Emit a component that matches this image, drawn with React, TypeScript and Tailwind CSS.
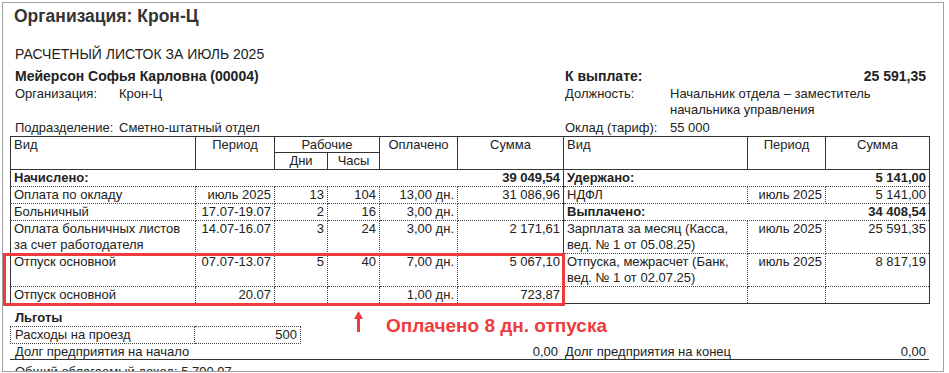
import React from "react"

const dot = "border border-dotted border-[#444] p-0 px-[3px] align-top leading-[16px] overflow-hidden"
const sep = "[border-right-style:solid] border-r-[#333]"
const th = "border border-[#333] p-0 px-[3px] align-top leading-[15px] font-normal text-center"

const Num = ({ children }: { children?: React.ReactNode }) => (
  <div className="text-right whitespace-nowrap">{children}</div>
)

export default function App() {
  return (
    <div className="relative h-[373px] w-[949px] overflow-hidden bg-white font-['Liberation_Sans',Arial,sans-serif] text-[13px] text-[#222]">
      <div className="mt-[2px] ml-[2px] h-[370px] w-[942px] overflow-hidden border border-[#a0a0a0]">
        <div className="pt-[3px] pl-[11px] text-[17.5px] leading-[20px] font-bold text-[#333]">Организация: Крон-Ц</div>
        <div className="mt-[20px] pl-[12px] text-[14px] leading-[16px]">РАСЧЕТНЫЙ ЛИСТОК ЗА ИЮЛЬ 2025</div>

        <div className="mt-[6px] ml-[7px] flex">
          <div className="w-[552px] pl-[5px]">
            <div className="h-[17px] text-[14px] leading-[17px] font-bold">Мейерсон Софья Карловна (00004)</div>
            <div className="flex h-[17px] leading-[17px]">
              <span className="w-[104px]">Организация:</span>
              <span>Крон-Ц</span>
            </div>
            <div className="h-[17px]" />
            <div className="flex h-[17px] leading-[17px]">
              <span className="w-[104px]">Подразделение:</span>
              <span>Сметно-штатный отдел</span>
            </div>
          </div>
          <div className="w-[367px] pr-[3px] pl-[3px]">
            <div className="flex h-[17px] justify-between text-[14px] leading-[17px] font-bold">
              <span>К выплате:</span>
              <span>25 591,35</span>
            </div>
            <div className="flex h-[34px] pt-[1px] leading-[16px]">
              <span className="w-[105px]">Должность:</span>
              <span>
                Начальник отдела – заместитель
                <br />
                начальника управления
              </span>
            </div>
            <div className="flex h-[17px] leading-[17px]">
              <span className="w-[105px]">Оклад (тариф):</span>
              <span>55 000</span>
            </div>
          </div>
        </div>

        <table className="ml-[7px] w-[919px] table-fixed border-collapse border border-[#333]">
          <colgroup>
            <col className="w-[185px]" />
            <col className="w-[79px]" />
            <col className="w-[53px]" />
            <col className="w-[52px]" />
            <col className="w-[78px]" />
            <col className="w-[106px]" />
            <col className="w-[184px]" />
            <col className="w-[78px]" />
            <col className="w-[104px]" />
          </colgroup>
          <thead>
            <tr className="h-[15px]">
              <th rowSpan={2} className={th + " text-left"}>Вид</th>
              <th rowSpan={2} className={th}>Период</th>
              <th colSpan={2} className={th}>Рабочие</th>
              <th rowSpan={2} className={th}>Оплачено</th>
              <th rowSpan={2} className={th}>Сумма</th>
              <th rowSpan={2} className={th + " text-left"}>Вид</th>
              <th rowSpan={2} className={th}>Период</th>
              <th rowSpan={2} className={th}>Сумма</th>
            </tr>
            <tr className="h-[17px]">
              <th className={th + " leading-[16px]"}>Дни</th>
              <th className={th + " leading-[16px]"}>Часы</th>
            </tr>
          </thead>
          <tbody>
            <tr className="h-[17px]">
              <td colSpan={6} className={dot + " " + sep + " font-bold"}>
                <div className="flex justify-between">
                  <span>Начислено:</span>
                  <span>39 049,54</span>
                </div>
              </td>
              <td colSpan={3} className={dot + " font-bold"}>
                <div className="flex justify-between">
                  <span>Удержано:</span>
                  <span>5 141,00</span>
                </div>
              </td>
            </tr>
            <tr className="h-[17px]">
              <td className={dot}>Оплата по окладу</td>
              <td className={dot}><Num>июль 2025</Num></td>
              <td className={dot}><Num>13</Num></td>
              <td className={dot}><Num>104</Num></td>
              <td className={dot}><Num>13,00 дн.</Num></td>
              <td className={dot + " " + sep}><Num>31 086,96</Num></td>
              <td className={dot}>НДФЛ</td>
              <td className={dot}><Num>июль 2025</Num></td>
              <td className={dot}><Num>5 141,00</Num></td>
            </tr>
            <tr className="h-[17px]">
              <td className={dot}>Больничный</td>
              <td className={dot}><Num>17.07-19.07</Num></td>
              <td className={dot}><Num>2</Num></td>
              <td className={dot}><Num>16</Num></td>
              <td className={dot}><Num>3,00 дн.</Num></td>
              <td className={dot + " " + sep}></td>
              <td colSpan={3} className={dot + " font-bold"}>
                <div className="flex justify-between">
                  <span>Выплачено:</span>
                  <span>34 408,54</span>
                </div>
              </td>
            </tr>
            <tr className="h-[33px]">
              <td className={dot}>Оплата больничных листов за счет работодателя</td>
              <td className={dot}><Num>14.07-16.07</Num></td>
              <td className={dot}><Num>3</Num></td>
              <td className={dot}><Num>24</Num></td>
              <td className={dot}><Num>3,00 дн.</Num></td>
              <td className={dot + " " + sep}><Num>2 171,61</Num></td>
              <td className={dot}>Зарплата за месяц (Касса, вед. № 1 от 05.08.25)</td>
              <td className={dot}><Num>июль 2025</Num></td>
              <td className={dot}><Num>25 591,35</Num></td>
            </tr>
            <tr className="h-[32px]">
              <td className={dot}>Отпуск основной</td>
              <td className={dot}><Num>07.07-13.07</Num></td>
              <td className={dot}><Num>5</Num></td>
              <td className={dot}><Num>40</Num></td>
              <td className={dot}><Num>7,00 дн.</Num></td>
              <td className={dot + " " + sep}><Num>5 067,10</Num></td>
              <td className={dot}>Отпуска, межрасчет (Банк, вед. № 1 от 02.07.25)</td>
              <td className={dot}><Num>июль 2025</Num></td>
              <td className={dot}><Num>8 817,19</Num></td>
            </tr>
            <tr className="h-[17px]">
              <td className={dot}>Отпуск основной</td>
              <td className={dot}><Num>20.07</Num></td>
              <td className={dot}></td>
              <td className={dot}></td>
              <td className={dot}><Num>1,00 дн.</Num></td>
              <td className={dot + " " + sep}><Num>723,87</Num></td>
              <td className={dot}></td>
              <td className={dot}></td>
              <td className={dot}></td>
            </tr>
          </tbody>
        </table>

        <div className="ml-[7px] w-[919px]">
          <div className="mt-[5px] h-[17px] pl-[5px] leading-[17px] font-bold">Льготы</div>
          <table className="w-[290px] table-fixed border-collapse">
            <colgroup>
              <col className="w-[184px]" />
              <col className="w-[106px]" />
            </colgroup>
            <tbody>
              <tr className="h-[17px]">
                <td className={dot + " pl-[4px]"}>Расходы на проезд</td>
                <td className={dot}><Num>500</Num></td>
              </tr>
            </tbody>
          </table>
          <div className="flex h-[16px] leading-[15px]">
            <div className="flex w-[552px] justify-between border-b border-[#333] pr-[4px] pl-[5px]">
              <span>Долг предприятия на начало</span>
              <span>0,00</span>
            </div>
            <div className="flex w-[367px] justify-between border-b border-[#333] pr-[3px] pl-[3px]">
              <span>Долг предприятия на конец</span>
              <span>0,00</span>
            </div>
          </div>
          <div className="mt-[4px] pl-[5px] leading-[16px]">Общий облагаемый доход: 5 790,97</div>
        </div>
      </div>

      <div className="absolute top-[253px] left-[3px] h-[53px] w-[562px] border-[3px] border-[#ef3b3b]" />
      <svg className="absolute top-[311px] left-[354px]" width="9" height="21" viewBox="0 0 9 21">
        <path d="M4.5 6 V21" stroke="#ef3b3b" strokeWidth="3" />
        <path d="M0 8 L4.5 0 L9 8 Z" fill="#ef3b3b" />
      </svg>
      <div className="absolute top-[315px] left-[386px] text-[19px] leading-[22px] font-bold text-[#ef3b3b]">
        Оплачено 8 дн. отпуска
      </div>
    </div>
  )
}
